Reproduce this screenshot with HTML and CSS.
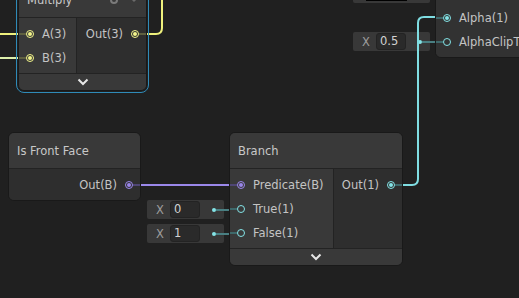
FILE: index.html
```html
<!DOCTYPE html>
<html>
<head>
<meta charset="utf-8">
<link rel="stylesheet" href="styles.css">
</head>
<body>
<div class="canvas">
  <div class="field f-color"><span class="swatch"></span></div>
  <div class="field link f-half"><span class="lbl">X</span><span class="val">0.5</span></div>
  <div class="field link f-true"><span class="lbl">X</span><span class="val">0</span></div>
  <div class="field link f-false"><span class="lbl">X</span><span class="val">1</span></div>

  <svg class="wires" width="519" height="298" viewBox="0 0 519 298">
    <path d="M0 34H20" stroke="#eef07c" stroke-width="2" fill="none"/>
    <path d="M0 58H20" stroke="#dcefab" stroke-width="2" fill="none"/>
    <path d="M144 34H156Q162 34 162 28V-5" stroke="#eef07c" stroke-width="2" fill="none"/>
    <path d="M138 185H232" stroke="#9b88ea" stroke-width="2" fill="none"/>
    <path d="M399 185H412Q418 185 418 179V23Q418 17 424 17H438" stroke="#7fdde2" stroke-width="2" fill="none"/>
  </svg>

  <div class="sel">
    <div class="node multiply">
      <div class="hdr">Multiply
        <span class="tools">
          <svg class="gear" width="10" height="10" viewBox="0 0 10 10"><circle cx="5" cy="5" r="3" fill="none" stroke="#7a7a7a" stroke-width="2"/></svg>
          <svg class="drop" width="8" height="6" viewBox="0 0 8 6"><path d="M1 1L4 4L7 1" fill="none" stroke="#6a6a6a" stroke-width="1.5"/></svg>
        </span>
      </div>
      <div class="body">
        <div class="ins">
          <div class="row in t-v3"><span class="port on"></span>A(3)</div>
          <div class="row in t-v3"><span class="port on"></span>B(3)</div>
        </div>
        <div class="outs">
          <div class="row out t-v3">Out(3)<span class="port on"></span></div>
        </div>
      </div>
      <div class="foot"><svg width="12" height="8" viewBox="0 0 12 8"><path d="M1.5 1.5L6 6L10.5 1.5" fill="none" stroke="#e6e6e6" stroke-width="2"/></svg></div>
    </div>
  </div>

  <div class="node master">
    <div class="hdr"></div>
    <div class="body">
      <div class="ins">
        <div class="row in t-v3"><span class="port"></span>Color(3)</div>
        <div class="row in t-v1"><span class="port on"></span>Alpha(1)</div>
        <div class="row in t-v1"><span class="port"></span>AlphaClipThreshold(1)</div>
      </div>
    </div>
  </div>

  <div class="node front">
    <div class="hdr">Is Front Face</div>
    <div class="body">
      <div class="outs">
        <div class="row out t-b">Out(B)<span class="port on"></span></div>
      </div>
    </div>
  </div>

  <div class="node branch">
    <div class="hdr">Branch</div>
    <div class="body">
      <div class="ins">
        <div class="row in t-b"><span class="port on"></span>Predicate(B)</div>
        <div class="row in t-v1"><span class="port"></span>True(1)</div>
        <div class="row in t-v1"><span class="port"></span>False(1)</div>
      </div>
      <div class="outs">
        <div class="row out t-v1">Out(1)<span class="port on"></span></div>
      </div>
    </div>
    <div class="foot"><svg width="12" height="8" viewBox="0 0 12 8"><path d="M1.5 1.5L6 6L10.5 1.5" fill="none" stroke="#e6e6e6" stroke-width="2"/></svg></div>
  </div>
</div>
</body>
</html>
```
FILE: styles.css
```css
* { box-sizing: border-box; }
body {
  margin: 0;
  background: #202020;
  font-family: "DejaVu Sans", sans-serif;
  font-size: 11.5px;
  color: #c4c4c4;
}
.canvas {
  position: relative;
  width: 519px;
  height: 298px;
  overflow: hidden;
  background: #202020;
}
.wires { position: absolute; left: 0; top: 0; }

/* inline value fields */
.field {
  position: absolute;
  width: 77px;
  height: 19px;
  background: #383838;
  border-radius: 2px;
  display: flex;
  align-items: center;
  padding-left: 9px;
}
.field .lbl { width: 14px; color: #9c9c9c; }
.field .val {
  width: 30px;
  height: 17px;
  background: #2a2a2a;
  border: 1px solid #232323;
  border-radius: 3px;
  padding-left: 3px;
  line-height: 15px;
  color: #d2d2d2;
}
.field.link::before {
  content: "";
  position: absolute;
  left: 69px;
  top: 8.5px;
  width: 22px;
  height: 2px;
  background: #497f82;
}
.field.link::after {
  content: "";
  position: absolute;
  left: 65px;
  top: 7.5px;
  width: 4px;
  height: 4px;
  border-radius: 50%;
  background: #84e4e7;
}
.field .swatch {
  margin-left: 4px;
  width: 41px;
  height: 14px;
  background: #000;
}
.f-color { left: 353px; top: -16px; }
.f-half { left: 353px; top: 32px; }
.f-true { left: 147px; top: 200px; }
.f-false { left: 147px; top: 224px; }

/* nodes */
.node {
  position: absolute;
  background: #2e2e2e;
  border: 1px solid #191919;
  border-radius: 6px;
  overflow: hidden;
}
.sel {
  position: absolute;
  left: 16px;
  top: -21px;
  width: 133px;
  border: 1px solid #2f8bb8;
  border-radius: 8px;
  padding: 1px;
}
.sel .node { position: static; }
.hdr {
  height: 36px;
  background: #393939;
  border-bottom: 1px solid #232323;
  display: flex;
  align-items: center;
  padding-left: 8px;
  color: #c8c8c8;
}
.tools { margin-left: auto; display: flex; align-items: center; gap: 11px; padding-right: 8px; }
.body { display: flex; }
.ins {
  background: #393939;
  border-right: 1px solid #232323;
  padding: 4px 0 3px;
}
.outs {
  flex: 1;
  background: #2e2e2e;
  padding: 4px 0 3px;
}
.row {
  height: 24px;
  display: flex;
  align-items: center;
  gap: 8px;
  position: relative;
  white-space: nowrap;
}
.in { padding-left: 7px; }
.out { justify-content: flex-end; padding-right: 7px; }
.in::before, .out::after {
  content: "";
  position: absolute;
  top: 11px;
  width: 7px;
  height: 2px;
  background: var(--stub);
}
.in::before { left: 0; }
.out::after { right: 0; }
.port {
  flex: none;
  position: relative;
  width: 8px;
  height: 8px;
  border-radius: 50%;
  border: 1px solid var(--pc);
}
.port.on::after {
  content: "";
  position: absolute;
  left: 1px;
  top: 1px;
  width: 4px;
  height: 4px;
  border-radius: 50%;
  background: var(--pc);
}
.t-v1 { --pc: #84e4e7; --stub: #3e686a; }
.t-v3 { --pc: #f3f58a; --stub: #5f6040; }
.t-b { --pc: #9a86ea; --stub: #4f4675; }
.foot {
  height: 17px;
  background: #393939;
  border-top: 1px solid #232323;
  display: flex;
  align-items: center;
  justify-content: center;
}
.foot svg { display: block; }

.multiply { width: 129px; }
.multiply .ins { width: 58px; }

.master { left: 435px; top: -59px; width: 200px; background: #323232; }
.master .ins { flex: 1; border-right: 0; background: #323232; }

.front { left: 8px; top: 132px; width: 133px; }

.branch { left: 229px; top: 132px; width: 174px; }
.branch .ins { width: 104px; }
```
